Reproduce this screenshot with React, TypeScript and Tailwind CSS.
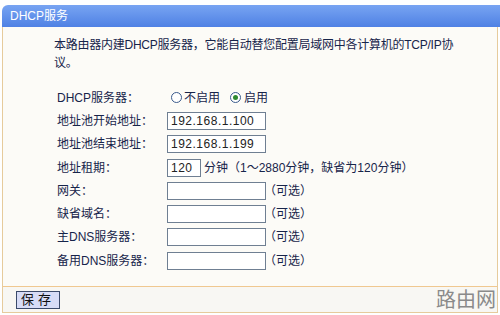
const font = '[font-family:"Liberation_Sans","Noto_Sans_CJK_SC",sans-serif]';

type Row = {
  label: string;
  kind: 'radio' | 'ip' | 'lease' | 'optional';
  value?: string;
};

const rows: Row[] = [
  { label: 'DHCP服务器：', kind: 'radio' },
  { label: '地址池开始地址：', kind: 'ip', value: '192.168.1.100' },
  { label: '地址池结束地址：', kind: 'ip', value: '192.168.1.199' },
  { label: '地址租期：', kind: 'lease', value: '120' },
  { label: '网关：', kind: 'optional' },
  { label: '缺省域名：', kind: 'optional' },
  { label: '主DNS服务器：', kind: 'optional' },
  { label: '备用DNS服务器：', kind: 'optional' },
];

function Radio({ checked }: { checked?: boolean }) {
  return (
    <span className="flex h-[11px] w-[11px] items-center justify-center rounded-full border border-[#3a5a8c] bg-white">
      {checked ? <span className="h-[5px] w-[5px] rounded-full bg-[#2f8a2f]" /> : null}
    </span>
  );
}

function Field({ row }: { row: Row }) {
  const box = 'flex h-[18px] items-center border border-[#6f7f92] bg-white pl-[3px] text-[12px] tracking-[0.5px] text-[#222]';

  if (row.kind === 'radio') {
    return (
      <div className="flex items-center text-[12px] text-[#17244a]">
        <span className="ml-[4px]"><Radio /></span>
        <span className="ml-[2px]">不启用</span>
        <span className="ml-[10px]"><Radio checked /></span>
        <span className="ml-[3px]">启用</span>
      </div>
    );
  }
  if (row.kind === 'ip') {
    return <div className={`${box} w-[99px]`}>{row.value}</div>;
  }
  if (row.kind === 'lease') {
    return (
      <div className="flex items-center">
        <div className={`${box} w-[34px]`}>{row.value}</div>
        <span className="ml-[3px] text-[12px] text-[#17244a]">分钟（1～2880分钟，缺省为120分钟）</span>
      </div>
    );
  }
  return (
    <div className="flex items-center">
      <div className={`${box} w-[99px]`} />
      <span className="-ml-[2px] text-[12px] text-[#17244a]">（可选）</span>
    </div>
  );
}

export default function App() {
  return (
    <div className={`flex h-[315px] w-[500px] flex-col bg-white pt-[5px] ${font}`}>
      <div className="ml-[2px] flex h-[22px] items-center rounded-tl-[6px] bg-gradient-to-b from-[#78a4f2] to-[#4f81e4] pl-[8px] text-[12px] text-white">
        DHCP服务
      </div>

      <div className="mx-[2px] flex flex-1 flex-col border-x border-[#e6cb9c] bg-[#fcfbf7]">
        <p className="whitespace-nowrap pl-[51px] pt-[9px] text-[12px] leading-[18px] tracking-[-0.25px] text-[#17244a]">
          本路由器内建DHCP服务器，它能自动替您配置局域网中各计算机的TCP/IP协
          <br />
          议。
        </p>

        <div className="mt-[14px] flex flex-col">
          {rows.map((row) => (
            <div key={row.label} className="flex h-[23.3px] items-center">
              <span className="w-[164px] pl-[54px] text-[12px] text-[#17244a]">{row.label}</span>
              <Field row={row} />
            </div>
          ))}
        </div>
      </div>

      <div className="mx-[2px] flex h-[27px] items-center justify-between border-x border-t border-b border-[#e6cb9c] border-t-[#f0c890] bg-[#f8f7f3]">
        <button
          type="button"
          className="ml-[13px] flex h-[18px] w-[44px] items-center justify-center border border-[#3b4a6a] bg-[#d7dcf6] text-[13px] leading-none tracking-[4px] text-[#111]"
        >
          保存
        </button>
        <span className="mr-[1px] text-[20px] leading-none text-[#8a8a8a]">路由网</span>
      </div>
      <div className="h-[2px]" />
    </div>
  );
}
